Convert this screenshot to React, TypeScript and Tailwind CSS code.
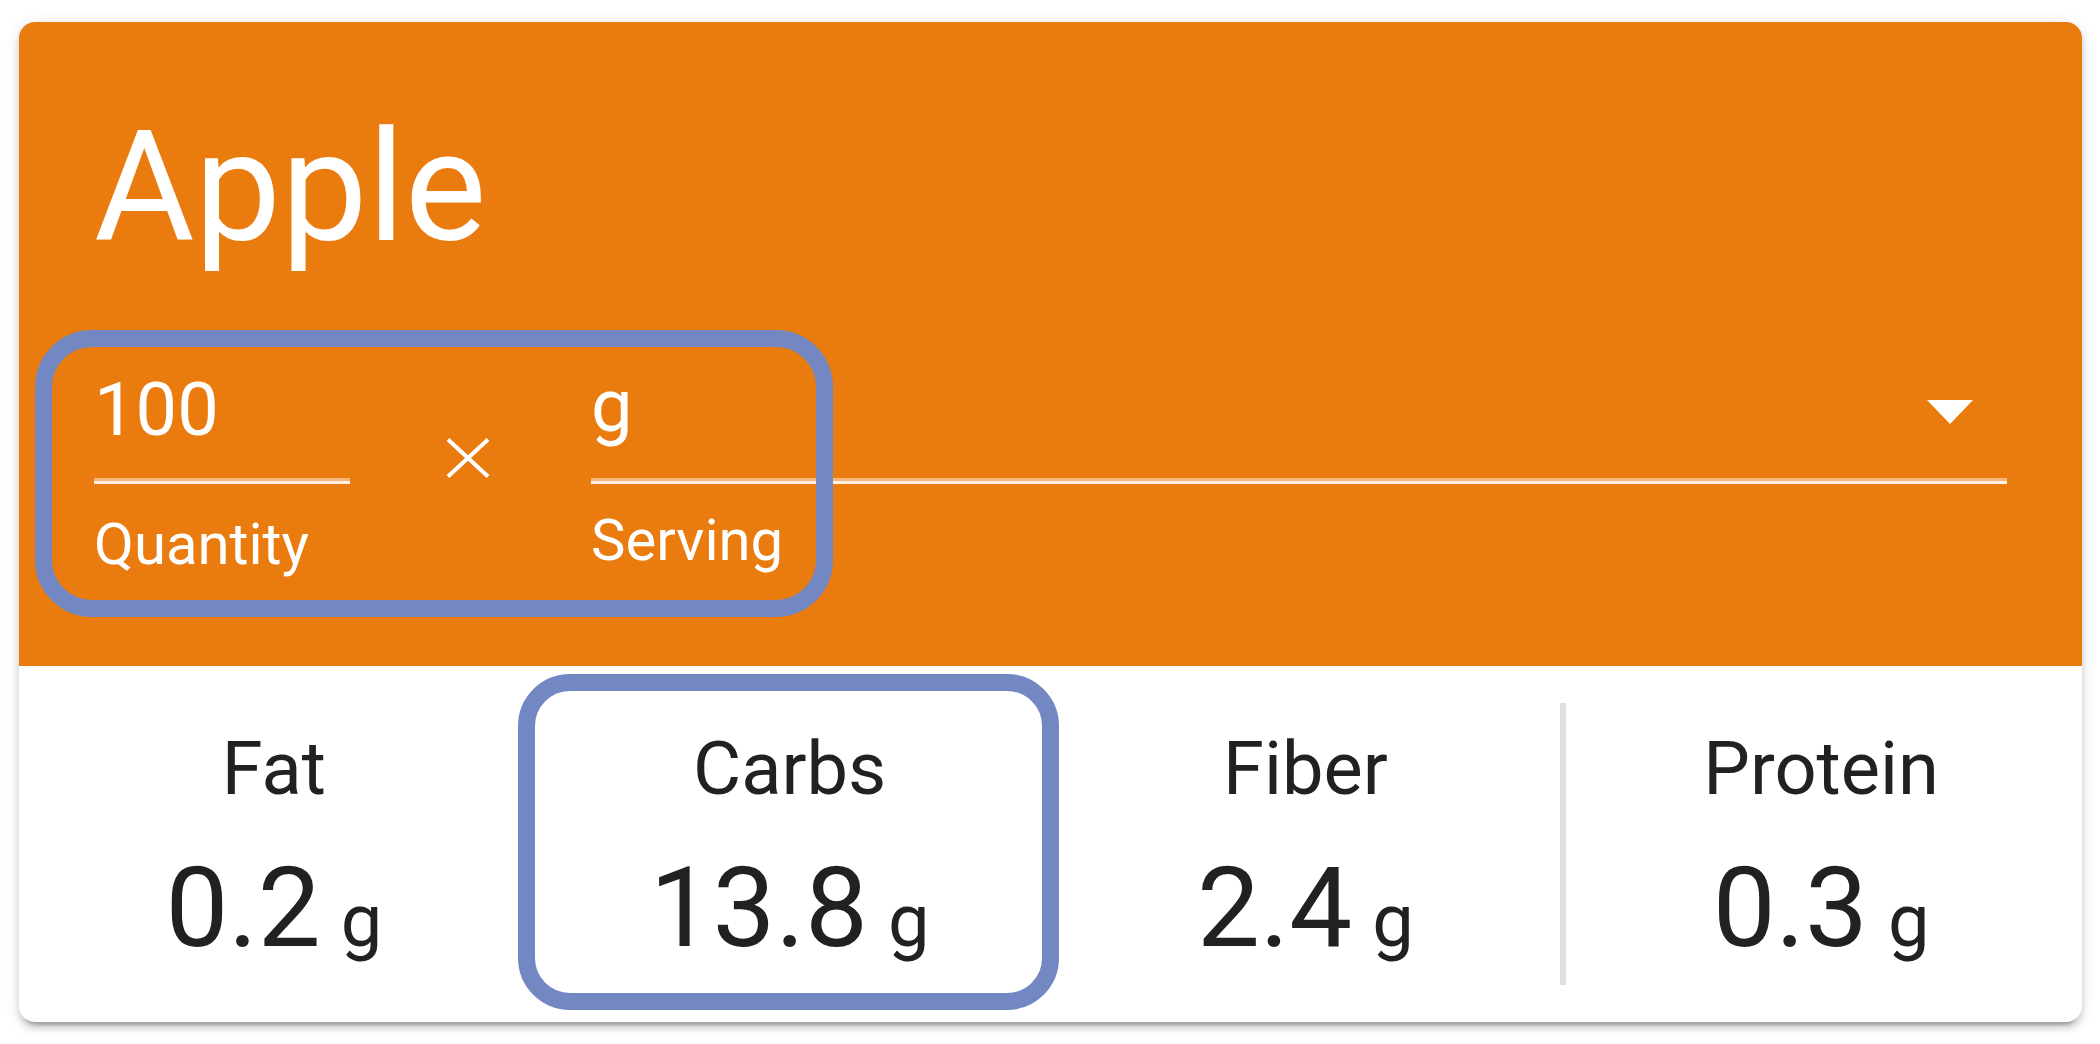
import { useState } from "react";

type Nutrient = { name: string; value: string; highlighted?: boolean; divided?: boolean };

const nutrients: Nutrient[] = [
  { name: "Fat", value: "0.2" },
  { name: "Carbs", value: "13.8", highlighted: true },
  { name: "Fiber", value: "2.4", divided: true },
  { name: "Protein", value: "0.3" },
];

const fieldLine =
  "w-full appearance-none rounded-none border-0 border-b-[3px] border-[#fdf0e4] bg-transparent px-0 pt-0 text-[74px] leading-[88px] text-white shadow-[inset_0_-3px_0_#f5b679] outline-none";

function NutrientCell({ name, value, highlighted, divided }: Nutrient) {
  return (
    <div
      className={`relative border-r-[6px] pt-[22px] pb-[11px] text-center ${
        divided ? "border-[#e0e0e0]" : "border-transparent"
      }`}
    >
      <dt className="text-[74px] leading-[88px]">{name}</dt>
      <dd className="mt-[29px] text-[112px] leading-[132px]">
        {value}
        <span className="ml-[20px] text-[74px] leading-none">g</span>
      </dd>
      {highlighted && (
        <div className="pointer-events-none absolute -top-[29px] -right-[14px] -bottom-[25px] -left-[17px] rounded-[52px] border-[17px] border-[#7388c2]" />
      )}
    </div>
  );
}

export default function App() {
  const [quantity, setQuantity] = useState("100");

  return (
    <main className="bg-white py-[22px] pr-[18px] pl-[19px] font-['Roboto',sans-serif] text-[#212121]">
      <article className="rounded-2xl bg-white shadow-[0_9px_3px_-6px_rgba(0,0,0,0.2),0_6px_6px_rgba(0,0,0,0.14),0_3px_15px_rgba(0,0,0,0.12)]">
        <header className="rounded-t-2xl bg-[#ea7c0f] px-[75px] pt-[76px] pb-[90px] text-white">
          <h1 className="text-[154px] leading-[180px]">Apple</h1>
          <div className="relative mt-[87px] flex">
            <div className="w-[256px]">
              <input
                id="quantity"
                type="text"
                inputMode="decimal"
                value={quantity}
                onChange={(e) => setQuantity(e.target.value)}
                className={`${fieldLine} h-[119px] pb-[28px]`}
              />
              <label htmlFor="quantity" className="mt-[28px] block text-[58px] leading-[64px]">
                Quantity
              </label>
            </div>
            <div className="flex w-[241px] justify-center pt-[73px] pr-[6px]">
              <svg width="44" height="40" viewBox="0 0 44 40" fill="none" stroke="white" strokeWidth="4" aria-hidden="true">
                <path d="M2 1.500 42 38.500M42 1.500 2 38.500" />
              </svg>
            </div>
            <div className="relative -mt-[3px] flex-1">
              <select id="serving" className={`${fieldLine} h-[122px] pb-[31px]`}>
                <option>g</option>
              </select>
              <svg
                className="pointer-events-none absolute top-[38px] right-[34px]"
                width="46"
                height="24"
                viewBox="0 0 46 24"
                fill="white"
                aria-hidden="true"
              >
                <path d="M0 0h46L23 24z" />
              </svg>
              <label htmlFor="serving" className="mt-[24px] block text-[58px] leading-[64px]">
                Serving
              </label>
            </div>
            <div className="pointer-events-none absolute -top-[35px] -left-[59px] h-[287px] w-[798px] rounded-[57px] border-[17px] border-[#7388c2]" />
          </div>
        </header>
        <dl className="grid grid-cols-4 py-[37px]">
          {nutrients.map((n) => (
            <NutrientCell key={n.name} {...n} />
          ))}
        </dl>
      </article>
    </main>
  );
}
